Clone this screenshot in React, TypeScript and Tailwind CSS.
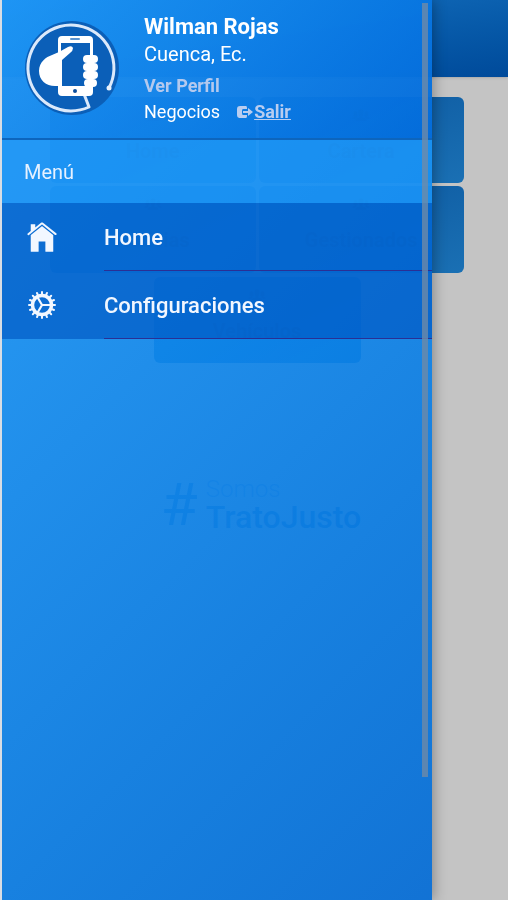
import type { ReactNode } from 'react'
import { IoIosHome, IoIosPeople } from 'react-icons/io'

interface TileProps {
  label: string
  className?: string
}

function Tile({ label, className = '' }: TileProps) {
  return (
    <button
      className={`flex flex-col items-center rounded-md bg-linear-to-br from-[#0b559c] to-[#1a70b4] pt-2 text-xl font-bold text-[#06264f] ${className}`}
    >
      <IoIosPeople className="size-5" />
      <span className="mt-3">{label}</span>
    </button>
  )
}

interface MenuItemProps {
  href: string
  icon: ReactNode
  label: string
}

function MenuItem({ href, icon, label }: MenuItemProps) {
  return (
    <li>
      <a href={href} className="flex h-[68px] items-stretch pl-[22px] text-[22px] font-medium text-[#f2f7ff]">
        <span className="flex w-20 items-center">{icon}</span>
        <span className="flex flex-1 items-center border-b border-[#2a2f94] pt-0.5">{label}</span>
      </a>
    </li>
  )
}

const TEETH = Array.from({ length: 16 }, (_, i) => i * 22.5)

function GearIcon() {
  return (
    <svg viewBox="0 0 36 36" className="size-9" fill="none" stroke="currentColor" aria-hidden="true">
      <circle cx="18" cy="18" r="9.5" strokeWidth="3.4" />
      {TEETH.map((angle) => (
        <path key={angle} d="M18 8 V5" strokeWidth="2" strokeLinecap="round" transform={`rotate(${angle} 18 18)`} />
      ))}
      <path d="M18 18 H27 M18 18 L13.5 10.2 M18 18 L13.5 25.8" strokeWidth="2.2" />
    </svg>
  )
}

function ExitIcon() {
  return (
    <svg viewBox="0 0 18 18" className="size-[18px]" fill="currentColor" aria-hidden="true">
      <path d="M4 3 H10 Q11 3 11 5 V6 H7 Q6 6 6 8 V10 Q6 12 7 12 H11 V13 Q11 15 10 15 H4 Q1 15 1 12 V6 Q1 3 4 3 Z" />
      <path d="M7 8 H12 V5 L17 9 L12 13 V10 H7 Z" />
    </svg>
  )
}

function Logo() {
  return (
    <svg viewBox="0 0 96 96" className="size-24 shrink-0" aria-label="Logo">
      <circle cx="48" cy="48" r="47" fill="#0b5fb8" />
      <path
        d="M85 68 A43 43 0 1 0 65 87 L60 74"
        fill="none"
        stroke="#dbe9fb"
        strokeWidth="3"
        strokeLinejoin="round"
      />
      <circle cx="85" cy="68" r="2.5" fill="#e8f1fc" />
      <rect x="34" y="16" width="35" height="60" rx="4" fill="#fff" />
      <rect x="37" y="23" width="29" height="43" fill="#0b5fb8" />
      <rect x="46" y="18" width="10" height="2" rx="1" fill="#5c93cf" />
      <circle cx="51" cy="71" r="2" fill="#0b4d9c" />
      <path
        d="M35 32 L44 27 Q48 25 49 28 Q49 31 46 33 L38 40 V66 H31 C22 66 15 60 15 51 C15 42 22 37 28 35 Z"
        fill="#fff"
      />
      <rect x="59" y="35" width="15" height="8" rx="4" fill="#fff" />
      <rect x="59" y="43" width="15" height="8" rx="4" fill="#fff" />
      <rect x="59" y="51" width="15" height="8" rx="4" fill="#fff" />
      <rect x="60" y="59" width="13" height="8" rx="4" fill="#fff" />
    </svg>
  )
}

function HomePage() {
  return (
    <div className="min-h-screen bg-[#c4c4c4]">
      <header className="h-[77px] bg-linear-to-br from-[#1976c4] to-[#004a9a] shadow-sm" />
      <main className="pt-5 pr-11 pl-[50px]">
        <div className="grid grid-cols-2 gap-[3px]">
          <Tile label="Home" className="h-[86px]" />
          <Tile label="Cartera" className="h-[86px]" />
          <Tile label="Noticias" className="h-[87px]" />
          <Tile label="Gestionados" className="h-[87px]" />
        </div>
        <Tile label="Vehículos" className="mx-auto mt-1 h-[86px] w-1/2" />
        <div className="mt-28 flex items-center justify-center gap-2 pl-2 text-[#3b76b4]">
          <span className="text-6xl">#</span>
          <div>
            <p className="text-2xl leading-6 font-light text-[#7a9cc0]">Somos</p>
            <p className="text-[32px] leading-8 font-medium">TratoJusto</p>
          </div>
        </div>
      </main>
    </div>
  )
}

function Drawer() {
  return (
    <aside className="fixed inset-y-0 left-0 flex w-[85%] flex-col border-l-2 border-[#d8dde4] shadow-[2px_0_12px_rgba(0,0,0,0.3)]">
      <div className="flex flex-1 flex-col bg-linear-135 from-[#1b9bfc]/91 to-[#006ad6]/91">
        <header className="flex h-[140px] items-start gap-6 border-b-2 border-[#0d65bd] bg-linear-135 from-[#2094f2]/70 to-[#0061d4]/70 pl-[22px]">
          <div className="pt-5">
            <Logo />
          </div>
          <div className="pt-3 text-lg text-white">
            <h1 className="text-[22px] leading-[30px] font-bold">Wilman Rojas</h1>
            <p className="text-xl leading-6">Cuenca, Ec.</p>
            <a href="#perfil" className="block pt-1 leading-8 font-bold text-[#b4c9ee]">
              Ver Perfil
            </a>
            <div className="flex items-center gap-4 leading-5">
              <a href="#negocios">Negocios</a>
              <a href="#salir" className="flex items-center font-bold text-[#b9cdf0]">
                <ExitIcon />
                <span className="underline">Salir</span>
              </a>
            </div>
          </div>
        </header>
        <h2 className="flex h-[63px] items-center bg-[#2298f6]/60 pl-[22px] text-xl text-[#e6f1ff]">Menú</h2>
        <nav>
          <ul className="bg-[#0058c3]/65">
            <MenuItem href="#home" icon={<IoIosHome className="size-9" />} label="Home" />
            <MenuItem href="#config" icon={<GearIcon />} label="Configuraciones" />
          </ul>
        </nav>
      </div>
      <div className="absolute top-[3px] right-1 h-[86%] w-1.5 bg-[#6f8ba8]/80" />
    </aside>
  )
}

export default function App() {
  return (
    <div className="font-[Roboto,sans-serif]">
      <HomePage />
      <Drawer />
    </div>
  )
}
